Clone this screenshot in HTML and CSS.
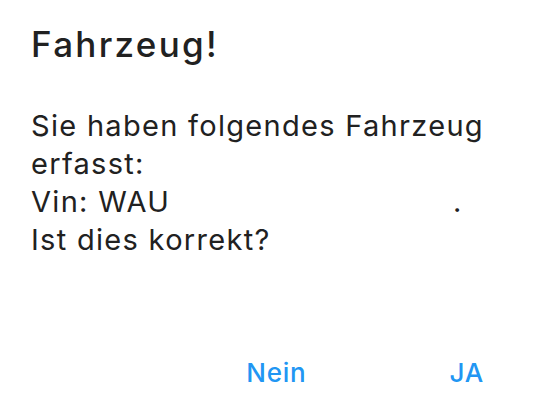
FILE: index.html
```html
<html><head>
    <title>Fahrzeug</title>
    <meta name="viewport" content="width=device-width, initial-scale=1">
    <link rel="stylesheet" href="styles.css">
    </head>
    <body>
    <div class="dialog">
        <h1 class="title">Fahrzeug!</h1>
        <p class="message">Sie haben folgendes Fahrzeug erfasst:<br>Vin: WAU<span class="vin-gap"></span>.<br>Ist dies korrekt?</p>
        <div class="actions">
            <button class="action">Nein</button>
            <button class="action">JA</button>
        </div>
    </div>
    </body>
    </html>
```
FILE: styles.css
```css
html {
    background-color: #ffffff;
}
body {
    margin: 0;
    font-family: Inter, "Noto Sans", sans-serif;
    color: #212121;
}
.dialog {
    width: 556px;
    height: 418px;
    padding: 21px 30px 0 31px;
    box-sizing: border-box;
    display: flex;
    flex-direction: column;
}
.title {
    margin: 0;
    font-size: 35px;
    font-weight: 500;
    line-height: 46px;
    letter-spacing: 2.3px;
}
.message {
    margin: 40px 0 0 0;
    font-size: 29px;
    line-height: 38px;
    letter-spacing: 1.3px;
    width: 490px;
}
.vin-gap {
    display: inline-block;
    width: 283px;
}
.actions {
    margin-top: auto;
    margin-bottom: 29px;
    display: flex;
    justify-content: flex-end;
    gap: 143px;
    padding-right: 42px;
}
.action {
    background: none;
    border: none;
    padding: 0;
    font-family: Inter, "Noto Sans", sans-serif;
    font-size: 26px;
    line-height: 32px;
    font-weight: 500;
    letter-spacing: 0.8px;
    color: #2196f3;
    cursor: pointer;
}
```
